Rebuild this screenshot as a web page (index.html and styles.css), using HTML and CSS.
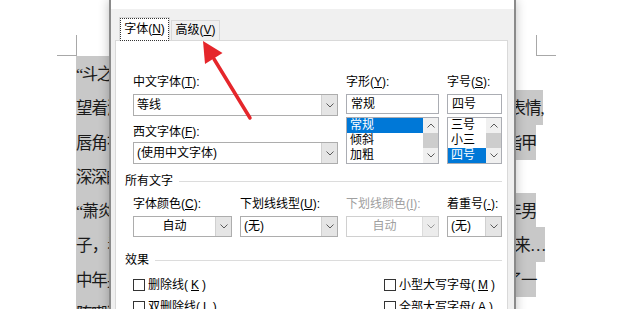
FILE: index.html
```html
<!DOCTYPE html>
<html lang="zh-CN">
<head>
  <meta charset="UTF-8">
  <title>字体</title>
  <link rel="stylesheet" href="styles.css">
</head>
<body>
  <div class="page">
    <div class="marks"><span class="mark mark-l"></span><span class="mark mark-r"></span></div>
    <div class="lines">
      <div class="ln"><span class="hl">“斗之力，三段！”</span></div>
      <div class="ln"><span class="hl full w467">望着测验魔石碑上面闪亮得甚至有些刺眼的五个大字，少年面无表情,</span></div>
      <div class="ln"><span class="hl full">唇角有着一抹自嘲，紧握的手掌，因为大力，而导致略微尖锐的指甲</span></div>
      <div class="ln"><span class="hl">深深的刺进了掌心之中，带来一阵阵钻心的疼痛……</span></div>
      <div class="ln"><span class="hl full">“萧炎，斗之力，三段！级别：低级！”测验魔石碑之旁，一位中年男</span></div>
      <div class="ln"><span class="hl full w469">子，看了一眼碑上所显示出来的信息，语气漠然的将之公布了出来…</span></div>
      <div class="ln"><span class="hl full">中年男子话刚刚脱口，便是不出意外的在人头汹涌的广场上带起了一</span></div>
      <div class="ln"><span class="hl">阵嘲讽的骚动。</span></div>
    </div>
  </div>

  <div class="dialog">
    <div class="dlg-top"></div>
    <div class="tabs">
      <div class="tab active"><span class="focus">字体(<u>N</u>)</span></div>
      <div class="tab">高级(<u>V</u>)</div>
    </div>
    <div class="panel">
      <div class="font-grid">
        <div class="col">
          <div class="lbl">中文字体(<u>T</u>):</div>
          <div class="combo">
            <span class="val">等线</span>
            <span class="drop"><svg width="8" height="5" viewBox="0 0 8 5"><polyline points="0.5,0.5 4,4 7.5,0.5" fill="none" stroke="#5a5a5a"/></svg></span>
          </div>
          <div class="lbl lbl-2">西文字体(<u>F</u>):</div>
          <div class="combo combo-2">
            <span class="val">(使用中文字体)</span>
            <span class="drop"><svg width="8" height="5" viewBox="0 0 8 5"><polyline points="0.5,0.5 4,4 7.5,0.5" fill="none" stroke="#5a5a5a"/></svg></span>
          </div>
        </div>
        <div class="col">
          <div class="lbl">字形(<u>Y</u>):</div>
          <div class="input">常规</div>
          <div class="list">
            <ul class="items">
              <li class="sel">常规</li>
              <li>倾斜</li>
              <li>加粗</li>
            </ul>
            <div class="sbar">
              <span class="sb-btn"><svg width="8" height="5" viewBox="0 0 8 5"><polyline points="0.5,4.5 4,1 7.5,4.5" fill="none" stroke="#5a5a5a"/></svg></span>
              <span class="sb-thumb"></span>
              <span class="sb-btn"><svg width="8" height="5" viewBox="0 0 8 5"><polyline points="0.5,0.5 4,4 7.5,0.5" fill="none" stroke="#5a5a5a"/></svg></span>
            </div>
          </div>
        </div>
        <div class="col">
          <div class="lbl">字号(<u>S</u>):</div>
          <div class="input">四号</div>
          <div class="list">
            <ul class="items">
              <li>三号</li>
              <li>小三</li>
              <li class="sel">四号</li>
            </ul>
            <div class="sbar">
              <span class="sb-btn"><svg width="8" height="5" viewBox="0 0 8 5"><polyline points="0.5,4.5 4,1 7.5,4.5" fill="none" stroke="#5a5a5a"/></svg></span>
              <span class="sb-thumb"></span>
              <span class="sb-btn"><svg width="8" height="5" viewBox="0 0 8 5"><polyline points="0.5,0.5 4,4 7.5,0.5" fill="none" stroke="#5a5a5a"/></svg></span>
            </div>
          </div>
        </div>
      </div>

      <div class="sect">所有文字</div>
      <div class="row-grid">
        <div class="col">
          <div class="lbl">字体颜色(<u>C</u>):</div>
          <div class="combo combo-sm">
            <span class="val center">自动</span>
            <span class="drop"><svg width="8" height="5" viewBox="0 0 8 5"><polyline points="0.5,0.5 4,4 7.5,0.5" fill="none" stroke="#5a5a5a"/></svg></span>
          </div>
        </div>
        <div class="col">
          <div class="lbl">下划线线型(<u>U</u>):</div>
          <div class="combo combo-sm">
            <span class="val">(无)</span>
            <span class="drop"><svg width="8" height="5" viewBox="0 0 8 5"><polyline points="0.5,0.5 4,4 7.5,0.5" fill="none" stroke="#5a5a5a"/></svg></span>
          </div>
        </div>
        <div class="col disabled">
          <div class="lbl">下划线颜色(<u>I</u>):</div>
          <div class="combo combo-sm">
            <span class="val center">自动</span>
            <span class="drop"><svg width="8" height="5" viewBox="0 0 8 5"><polyline points="0.5,0.5 4,4 7.5,0.5" fill="none" stroke="#9a9a9a"/></svg></span>
          </div>
        </div>
        <div class="col">
          <div class="lbl">着重号(<u>·</u>):</div>
          <div class="combo combo-sm">
            <span class="val">(无)</span>
            <span class="drop"><svg width="8" height="5" viewBox="0 0 8 5"><polyline points="0.5,0.5 4,4 7.5,0.5" fill="none" stroke="#5a5a5a"/></svg></span>
          </div>
        </div>
      </div>

      <div class="sect sect-fx">效果</div>
      <div class="checks">
        <label class="chk"><span class="box"></span>删除线(<u>K</u>)</label>
        <label class="chk"><span class="box"></span>小型大写字母(<u>M</u>)</label>
        <label class="chk"><span class="box"></span>双删除线(<u>L</u>)</label>
        <label class="chk"><span class="box"></span>全部大写字母(<u>A</u>)</label>
      </div>
    </div>
  </div>

  <svg class="arrow" width="620" height="309" viewBox="0 0 620 309">
    <line x1="250" y1="118" x2="214" y2="59" stroke="#e5262b" stroke-width="3.5" stroke-linecap="round"/>
    <polygon points="203,41 222.5,53 205,64" fill="#e5262b"/>
  </svg>
</body>
</html>
```

FILE: styles.css
```css
body {
  margin: 0;
  width: 620px;
  height: 309px;
  overflow: hidden;
  position: relative;
  background: #fff;
  text-autospace: no-autospace;
}

.page {
  font-family: "Liberation Serif", "Noto Sans CJK SC", serif;
  font-size: 16.5px;
  letter-spacing: -1.5px;
  color: #1a1a1a;
}

.marks {
  display: flex;
  justify-content: space-between;
  width: 499px;
  height: 20px;
  margin: 35px 0 0 57px;
}

.mark {
  width: 19px;
  height: 20px;
  border-bottom: 1px solid #a8a8a8;
}

.mark-l {
  border-right: 1px solid #a8a8a8;
}

.mark-r {
  border-left: 1px solid #a8a8a8;
}

.lines {
  margin: 1px 0 0 76px;
}

.ln {
  height: 34.3px;
  white-space: nowrap;
}

.hl {
  display: inline-block;
  vertical-align: top;
  height: 35px;
  line-height: 38px;
  background: #c8c8c8;
}

.full {
  width: 460px;
  text-align: justify;
  text-align-last: justify;
}

.w467 {
  width: 467px;
}

.w469 {
  width: 469px;
}

/* dialog */
.dialog {
  position: absolute;
  top: 0;
  left: 109px;
  width: 403px;
  height: 330px;
  border-left: 2px solid #8a8a8a;
  border-right: 2px solid #8a8a8a;
  background: #f0f0f0;
  box-shadow: 0 0 10px rgba(0, 0, 0, 0.25);
  font-family: "Liberation Sans", "Noto Sans CJK SC", sans-serif;
  font-size: 12px;
  line-height: 16px;
  color: #000;
}

.dialog u {
  text-underline-offset: 1px;
}

.dlg-top {
  height: 9px;
  background: #fff;
}

.tabs {
  display: flex;
  align-items: flex-end;
  height: 23px;
  padding: 8px 0 0 8px;
}

.tab {
  width: 47px;
  height: 19px;
  margin-left: 1px;
  border: 1px solid #d9d9d9;
  border-bottom: 0;
  line-height: 19px;
  text-align: center;
  background: #f0f0f0;
}

.tab.active {
  width: 49px;
  height: 23px;
  margin: 0 0 -1px 0;
  position: relative;
  z-index: 1;
  display: flex;
  align-items: center;
  justify-content: center;
  background: #fff;
}

.focus {
  border: 1px dotted #333;
  padding: 1px 3px;
}

.panel {
  height: 300px;
  margin: 0 6px 0 4px;
  padding: 33px 5px 0 9px;
  border: 1px solid #d9d9d9;
  background: #fff;
}

.font-grid {
  display: grid;
  grid-template-columns: 205px 93px 55px;
  column-gap: 8px;
  margin-left: 8px;
}

.lbl {
  height: 16px;
  white-space: nowrap;
}

.lbl-2 {
  margin-top: 8px;
}

.combo {
  display: flex;
  height: 20px;
  margin-top: 4px;
  border: 1px solid #adadad;
  background: #fff;
}

.combo-2 {
  margin-top: 2px;
}

.combo-sm {
  height: 19px;
}

.val {
  flex: 1;
  padding-left: 3px;
  line-height: 20px;
  white-space: nowrap;
  overflow: hidden;
}

.combo-sm .val {
  line-height: 19px;
}

.val.center {
  padding: 0;
  text-align: center;
}

.drop {
  width: 15px;
  display: flex;
  align-items: center;
  justify-content: center;
  border-left: 1px solid #d0d0d0;
  background: #e5e5e5;
}

.disabled {
  color: #a0a0a0;
}

.disabled .combo {
  border-color: #d0d0d0;
}

.disabled .drop {
  background: #ececec;
  border-left-color: #dcdcdc;
}

.input {
  height: 18px;
  margin-top: 4px;
  padding-left: 4px;
  line-height: 18px;
  border: 1px solid #abadb3;
}

.list {
  display: flex;
  height: 45px;
  margin-top: 3px;
  border: 1px solid #abadb3;
}

.items {
  flex: 1;
  margin: 0;
  padding: 0;
  list-style: none;
}

.items li {
  height: 15px;
  line-height: 15px;
  padding-left: 3px;
}

.items li.sel {
  background: #0078d7;
  color: #fff;
}

.sbar {
  width: 15px;
  display: flex;
  flex-direction: column;
  background: #f0f0f0;
}

.sb-btn {
  height: 15px;
  display: flex;
  align-items: center;
  justify-content: center;
}

.sb-thumb {
  height: 15px;
  background: #cdcdcd;
}

.sect {
  display: flex;
  align-items: center;
  height: 16px;
  margin-top: 9px;
  white-space: nowrap;
}

.sect::after {
  content: "";
  flex: 1;
  margin-left: 6px;
  border-top: 1px solid #dcdcdc;
}

.sect-fx {
  margin-top: 15px;
}

.row-grid {
  display: grid;
  grid-template-columns: 99px 98px 93px 55px;
  column-gap: 8px;
  margin: 7px 0 0 8px;
}

.checks {
  display: grid;
  grid-template-columns: 251px auto;
  margin: 6px 0 0 8px;
}

.chk {
  display: flex;
  align-items: center;
  gap: 3px;
  height: 22px;
  white-space: nowrap;
}

.box {
  width: 10px;
  height: 10px;
  border: 1px solid #333;
  background: #fff;
}

.arrow {
  position: absolute;
  top: 0;
  left: 0;
  pointer-events: none;
}
```
